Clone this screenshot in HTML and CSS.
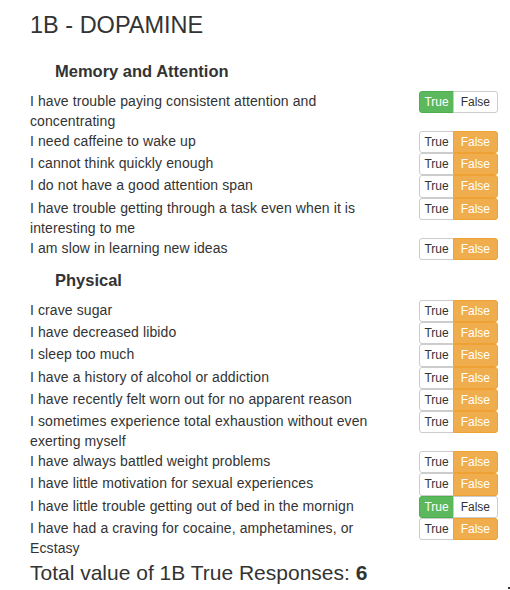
FILE: index.html
```html
<!DOCTYPE html>
<html>
<head>
<meta charset="utf-8">
<link rel="stylesheet" href="styles.css">
</head>
<body>
<div class="page">
  <h1 class="title">1B - DOPAMINE</h1>

  <h4 class="section">Memory and Attention</h4>
  <div class="item"><div class="q">I have trouble paying consistent attention and concentrating</div><div class="grp"><span class="btn yes on">True</span><span class="btn no">False</span></div></div>
  <div class="item"><div class="q">I need caffeine to wake up</div><div class="grp"><span class="btn yes">True</span><span class="btn no on">False</span></div></div>
  <div class="item"><div class="q">I cannot think quickly enough</div><div class="grp"><span class="btn yes">True</span><span class="btn no on">False</span></div></div>
  <div class="item"><div class="q">I do not have a good attention span</div><div class="grp"><span class="btn yes">True</span><span class="btn no on">False</span></div></div>
  <div class="item"><div class="q">I have trouble getting through a task even when it is interesting to me</div><div class="grp"><span class="btn yes">True</span><span class="btn no on">False</span></div></div>
  <div class="item"><div class="q">I am slow in learning new ideas</div><div class="grp"><span class="btn yes">True</span><span class="btn no on">False</span></div></div>

  <h4 class="section">Physical</h4>
  <div class="item"><div class="q">I crave sugar</div><div class="grp"><span class="btn yes">True</span><span class="btn no on">False</span></div></div>
  <div class="item"><div class="q">I have decreased libido</div><div class="grp"><span class="btn yes">True</span><span class="btn no on">False</span></div></div>
  <div class="item"><div class="q">I sleep too much</div><div class="grp"><span class="btn yes">True</span><span class="btn no on">False</span></div></div>
  <div class="item"><div class="q">I have a history of alcohol or addiction</div><div class="grp"><span class="btn yes">True</span><span class="btn no on">False</span></div></div>
  <div class="item"><div class="q">I have recently felt worn out for no apparent reason</div><div class="grp"><span class="btn yes">True</span><span class="btn no on">False</span></div></div>
  <div class="item"><div class="q">I sometimes experience total exhaustion without even exerting myself</div><div class="grp"><span class="btn yes">True</span><span class="btn no on">False</span></div></div>
  <div class="item"><div class="q">I have always battled weight problems</div><div class="grp"><span class="btn yes">True</span><span class="btn no on">False</span></div></div>
  <div class="item"><div class="q">I have little motivation for sexual experiences</div><div class="grp"><span class="btn yes">True</span><span class="btn no on">False</span></div></div>
  <div class="item"><div class="q">I have little trouble getting out of bed in the mornign</div><div class="grp"><span class="btn yes on">True</span><span class="btn no">False</span></div></div>
  <div class="item"><div class="q">I have had a craving for cocaine, amphetamines, or Ecstasy</div><div class="grp"><span class="btn yes">True</span><span class="btn no on">False</span></div></div>

  <div class="total">Total value of 1B True Responses: <b>6</b></div>
</div>
<span class="mark"></span>
</body>
</html>
```
FILE: styles.css
```css
html, body {
  margin: 0;
  padding: 0;
  background: #fff;
}
body {
  font-family: "Liberation Sans", Arial, sans-serif;
  font-size: 14px;
  line-height: 20px;
  color: #333;
  width: 510px;
  height: 590px;
  overflow: hidden;
  position: relative;
}
.page {
  padding: 13px 12px 0 30px;
}
.title {
  margin: 0 0 22px;
  font-size: 23.5px;
  font-weight: normal;
  line-height: 1.1;
}
.section {
  margin: 10px 0;
  padding-left: 25px;
  font-size: 16.5px;
  font-weight: bold;
  line-height: 20px;
}
.item {
  display: flex;
  justify-content: space-between;
  align-items: flex-start;
}
.q {
  width: 350px;
  letter-spacing: 0.1px;
}
.grp {
  display: flex;
  font-size: 12px;
  line-height: 18.25px;
}
.btn {
  padding: 1px 5px;
  border: 1px solid #ccc;
  background: #fff;
  color: #333;
}
.yes {
  padding: 1px 4px;
  border-radius: 3px 0 0 3px;
}
.no {
  padding: 1px 7px;
  border-radius: 0 3px 3px 0;
  margin-left: -1px;
}
.yes.on {
  background: #5cb85c;
  border-color: #4cae4c;
  color: #fff;
}
.no.on {
  background: #f0ad4e;
  border-color: #eea236;
  color: #fff;
}
.total {
  font-size: 21px;
  line-height: 1.1;
  margin-top: 3px;
}
.total b {
  font-weight: bold;
}
.mark {
  position: absolute;
  left: 508px;
  top: 587px;
  width: 2px;
  height: 2px;
  background: #333;
}
```
